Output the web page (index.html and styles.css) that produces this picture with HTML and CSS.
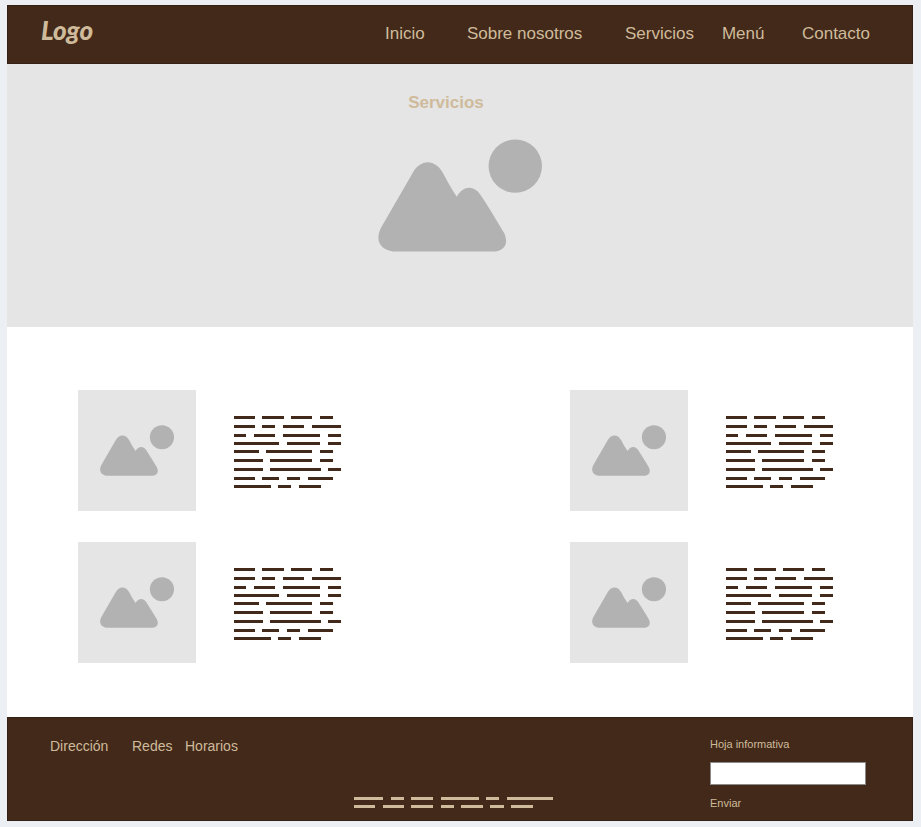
FILE: index.html
```html
<!DOCTYPE html>
<html lang="es">
<head>
  <meta charset="utf-8">
  <meta name="viewport" content="width=device-width, initial-scale=1">
  <title>Servicios</title>
  <link rel="stylesheet" href="styles.css">
</head>
<body>
  <svg class="defs" aria-hidden="true">
    <symbol id="picture" viewBox="54 56 491 338">
      <path d="M112 393C58 393 42 356 66 316L156 161C180 114 226 114 250 161C264 188 278 211 290 229C308 195 341 194 360 222C386 260 411 303 432 338C447 373 430 393 396 393Z"/>
      <circle cx="465" cy="137" r="80"/>
    </symbol>
    <symbol id="paragraph" viewBox="0 0 109 72">
      <path d="M1 1.5H22M29 1.5H51M58 1.5H79M87 1.5H100M1 10.5H22M29 10.5H42M50 10.5H71M79 10.5H108M1 19.5H13M21 19.5H42M50 19.5H87M95 19.5H108M1 27.5H46M54 27.5H87M95 27.5H108M1 35.5H26M33 35.5H79M87 35.5H100M1 44.5H30M37 44.5H79M87 44.5H100M1 53.5H30M37 53.5H88M95 53.5H108M1 62.5H22M29 62.5H46M54 62.5H67M75 62.5H100M1 70.5H38M45 70.5H58M66 70.5H88"/>
    </symbol>
  </svg>

  <div class="page">
    <header class="header">
      <a class="logo" href="#">Logo</a>
      <nav class="nav">
        <a href="#">Inicio</a>
        <a href="#">Sobre nosotros</a>
        <a href="#">Servicios</a>
        <a href="#">Menú</a>
        <a href="#">Contacto</a>
      </nav>
    </header>

    <section class="hero">
      <h1 class="hero-title">Servicios</h1>
      <svg class="hero-picture" aria-hidden="true"><use href="#picture"/></svg>
    </section>

    <main class="services">
      <article class="service">
        <div class="thumb"><svg aria-hidden="true"><use href="#picture"/></svg></div>
        <svg class="lines" aria-hidden="true"><use href="#paragraph"/></svg>
      </article>
      <article class="service">
        <div class="thumb"><svg aria-hidden="true"><use href="#picture"/></svg></div>
        <svg class="lines" aria-hidden="true"><use href="#paragraph"/></svg>
      </article>
      <article class="service">
        <div class="thumb"><svg aria-hidden="true"><use href="#picture"/></svg></div>
        <svg class="lines" aria-hidden="true"><use href="#paragraph"/></svg>
      </article>
      <article class="service">
        <div class="thumb"><svg aria-hidden="true"><use href="#picture"/></svg></div>
        <svg class="lines" aria-hidden="true"><use href="#paragraph"/></svg>
      </article>
    </main>

    <footer class="footer">
      <nav class="footer-links">
        <a href="#">Dirección</a>
        <a href="#">Redes</a>
        <a href="#">Horarios</a>
      </nav>
      <svg class="footer-lines" viewBox="0 0 200 11" aria-hidden="true">
        <path d="M1 1.5H30M38 1.5H51M58 1.5H80M88 1.5H126M133 1.5H146M154 1.5H200M1 9.5H22M30 9.5H51M58 9.5H80M88 9.5H101M108 9.5H130M137 9.5H151M158 9.5H180"/>
      </svg>
      <form class="newsletter">
        <label for="email">Hoja informativa</label>
        <input id="email" type="text">
        <button type="button">Enviar</button>
      </form>
    </footer>
  </div>
</body>
</html>
```
FILE: styles.css
```css
* {
  box-sizing: border-box;
}

body {
  margin: 0;
  padding: 5px 8px 5px 7px;
  background: #ecf0f5;
  font-family: "Liberation Sans", Arial, sans-serif;
  color: #cfbb9b;
}

a {
  color: inherit;
  text-decoration: none;
}

.defs {
  position: absolute;
  width: 0;
  height: 0;
}

.page {
  background: #fff;
}

.header {
  display: flex;
  align-items: flex-start;
  justify-content: space-between;
  padding: 12px 42px 14px 33px;
  background: #422919;
  border: 1px solid #342015;
}

.logo {
  font-family: Lato, "Liberation Sans", sans-serif;
  font-size: 26px;
  font-weight: 900;
  font-style: italic;
  line-height: 24px;
}

.nav {
  display: grid;
  grid-template-columns: 82px 158px 97px 80px auto;
  padding-top: 1px;
  font-size: 17px;
  line-height: 30px;
}

.hero {
  display: flex;
  flex-direction: column;
  align-items: center;
  gap: 26px;
  padding: 29px 0 75px;
  background: #e5e5e5;
}

.hero-title {
  margin: 0;
  padding-right: 28px;
  font-size: 17px;
  line-height: 20px;
}

.hero-picture {
  width: 164px;
  height: 113px;
  fill: #b2b2b2;
}

.services {
  display: grid;
  grid-template-columns: auto auto;
  justify-content: space-between;
  row-gap: 31px;
  padding: 63px 79px 54px 71px;
}

.service {
  display: flex;
  align-items: flex-start;
  gap: 37px;
}

.thumb {
  display: flex;
  width: 118px;
  padding: 35px 22px;
  background: #e5e5e5;
}

.thumb svg {
  width: 74px;
  height: 51px;
  fill: #b2b2b2;
}

.lines {
  width: 109px;
  height: 72px;
  margin-top: 26px;
  stroke: #422919;
  stroke-width: 3;
}

.footer {
  display: grid;
  grid-template-columns: 303px 1fr auto;
  padding: 19px 46px 10px 42px;
  background: #422919;
  border: 1px solid #342015;
}

.footer-links {
  display: grid;
  grid-template-columns: 82px 53px auto;
  justify-content: start;
  font-size: 14px;
  line-height: 18px;
}

.footer-lines {
  align-self: end;
  width: 200px;
  height: 11px;
  margin-bottom: 2px;
  stroke: #cfbb9b;
  stroke-width: 3;
}

.newsletter {
  display: flex;
  flex-direction: column;
  align-items: flex-start;
  gap: 11px;
  font-size: 11px;
  line-height: 14px;
}

.newsletter input {
  width: 156px;
  height: 23px;
  padding: 2px 6px;
  border: 1px solid #8a8a8a;
  background: #fff;
  font: inherit;
}

.newsletter button {
  padding: 0;
  border: 0;
  background: none;
  color: inherit;
  font: inherit;
  cursor: pointer;
}
```
